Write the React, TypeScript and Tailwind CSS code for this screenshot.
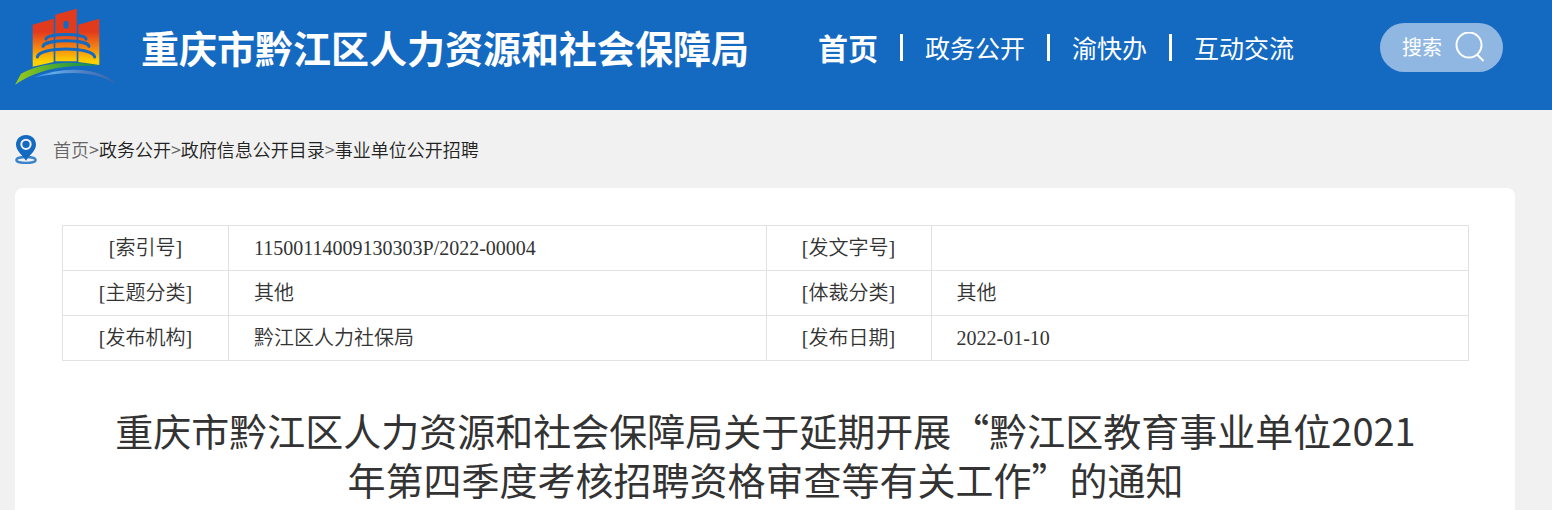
import React, { useState } from 'react';

const navItems = ['政务公开', '渝快办', '互动交流'];

const crumbs = ['首页', '政务公开', '政府信息公开目录', '事业单位公开招聘'];

const infoRows = [
  ['[索引号]', '11500114009130303P/2022-00004', '[发文字号]', ''],
  ['[主题分类]', '其他', '[体裁分类]', '其他'],
  ['[发布机构]', '黔江区人力社保局', '[发布日期]', '2022-01-10'],
];

function Logo() {
  return (
    <svg viewBox="45 27 306 234" className="w-[102px] h-[78px] shrink-0" aria-hidden="true">
      <defs>
        <linearGradient id="tower" gradientUnits="userSpaceOnUse" x1="0" y1="30" x2="0" y2="200">
          <stop offset="0.4" stopColor="#e23a1c" />
          <stop offset="0.7" stopColor="#f58a10" />
          <stop offset="0.92" stopColor="#fdd000" />
        </linearGradient>
        <linearGradient id="hill" x1="0" y1="0" x2="1" y2="0">
          <stop offset="0" stopColor="#9acb1c" />
          <stop offset="0.55" stopColor="#3fa535" />
          <stop offset="1" stopColor="#108a52" />
        </linearGradient>
        <linearGradient id="river" x1="0" y1="0" x2="1" y2="0">
          <stop offset="0" stopColor="#2f86dc" />
          <stop offset="0.25" stopColor="#62aae8" />
          <stop offset="0.6" stopColor="#4f80c4" />
          <stop offset="1" stopColor="#3a64a8" />
        </linearGradient>
      </defs>
      <path d="M98 77L161 59V189L98 203Z" fill="url(#tower)" />
      <path d="M166 47L230 29V187H166Z" fill="url(#tower)" />
      <path d="M235 77L298 59V198L235 189Z" fill="url(#tower)" />
      <ellipse cx="198" cy="77" rx="8" ry="12" fill="#1469c1" />
      <g fill="none" stroke="#1469c1" strokeWidth="9" strokeLinecap="round">
        <path d="M138 120C142 102 254 102 258 120" />
        <path d="M129 142C134 120 262 120 267 142" />
        <path d="M112 174C116 142 280 142 284 174" />
      </g>
      <path d="M63 224C130 188 225 184 298 201C205 197 115 207 45 258Z" fill="url(#hill)" />
      <path d="M100 236C185 202 300 200 351 258C290 213 200 215 100 236Z" fill="url(#river)" />
    </svg>
  );
}

function PinIcon() {
  return (
    <svg viewBox="0 0 66 87" className="w-[22px] h-[29px] shrink-0" aria-hidden="true">
      <ellipse cx="33" cy="75" rx="29" ry="9" fill="none" stroke="#3b83cb" strokeWidth="7" />
      <path
        d="M33 0C15 0 3 13 3 29C3 46 23 61 33 77C43 61 63 46 63 29C63 13 51 0 33 0Z"
        fill="#1469c1"
      />
      <circle cx="33" cy="28" r="14" fill="none" stroke="#f1f1f1" strokeWidth="6" />
    </svg>
  );
}

function SearchBox() {
  const [keyword, setKeyword] = useState('');

  return (
    <form
      onSubmit={(e) => e.preventDefault()}
      className="ml-auto flex h-[49px] w-[123px] shrink-0 items-center rounded-full bg-[#90b7e2] pl-[22px] pr-[18px]"
    >
      <input
        type="text"
        aria-label="搜索"
        placeholder="搜索"
        value={keyword}
        onChange={(e) => setKeyword(e.target.value)}
        className="w-full min-w-0 bg-transparent text-[20px] text-white outline-none placeholder:text-white"
      />
      <button type="submit" aria-label="提交搜索" className="shrink-0">
        <svg viewBox="0 0 30 30" className="size-[30px]" fill="none" stroke="#fff" strokeWidth="2">
          <circle cx="14" cy="13" r="12.5" />
          <path d="M22 22.500L28.500 29" />
        </svg>
      </button>
    </form>
  );
}

export default function App() {
  return (
    <div className="min-h-screen bg-[#f1f1f1] text-[#333] font-['Noto_Sans_CJK_SC',sans-serif]">
      {/* Site header */}
      <header className="flex h-[110px] items-center bg-[#1469c1] pb-4 pl-[15px] pr-[49px] text-white">
        <Logo />
        <p className="ml-6 whitespace-nowrap text-[38px] font-bold leading-none">重庆市黔江区人力资源和社会保障局</p>
        <nav className="ml-[69px] flex items-center gap-[22px] whitespace-nowrap text-[25px] leading-none">
          <a href="#" className="text-[30px] font-bold">首页</a>
          {navItems.map((item) => (
            <React.Fragment key={item}>
              <span className="h-[27px] w-[3px] bg-white"></span>
              <a href="#">{item}</a>
            </React.Fragment>
          ))}
        </nav>
        <SearchBox />
      </header>

      {/* Breadcrumb */}
      <div className="flex h-[78px] items-center gap-4 pl-[15px]">
        <PinIcon />
        <div className="text-[18px] font-[350] text-[#666]">
          {crumbs.map((crumb, i) => (
            <React.Fragment key={crumb}>
              {i > 0 && <span>&gt;</span>}
              <a href="#" className={i > 0 ? 'text-[#222]' : ''}>{crumb}</a>
            </React.Fragment>
          ))}
        </div>
      </div>

      {/* Article */}
      <main className="ml-[15px] mr-[37px] rounded-t-lg bg-white pb-10 pl-[47px] pr-[46px] pt-[37px]">
        <table className="w-full table-fixed border-collapse text-[20px] font-[350] font-['Liberation_Serif','Noto_Sans_CJK_SC',serif]">
          <colgroup>
            <col className="w-[166px]" />
            <col />
            <col className="w-[165px]" />
            <col />
          </colgroup>
          <tbody>
            {infoRows.map((row) => (
              <tr key={row[0]} className="h-[45px]">
                {row.map((cell, i) =>
                  i % 2 === 0 ? (
                    <th key={i} scope="row" className="border border-[#e2e2e2] text-center font-[350] leading-6">{cell}</th>
                  ) : (
                    <td key={i} className="border border-[#e2e2e2] px-[25px] leading-6">{cell}</td>
                  )
                )}
              </tr>
            ))}
          </tbody>
        </table>

        <h1 className="mt-11 px-10 text-center text-[38px] leading-[49px]">
          重庆市黔江区人力资源和社会保障局关于延期开展“黔江区教育事业单位2021年第四季度考核招聘资格审查等有关工作”的通知
        </h1>
      </main>
    </div>
  );
}
